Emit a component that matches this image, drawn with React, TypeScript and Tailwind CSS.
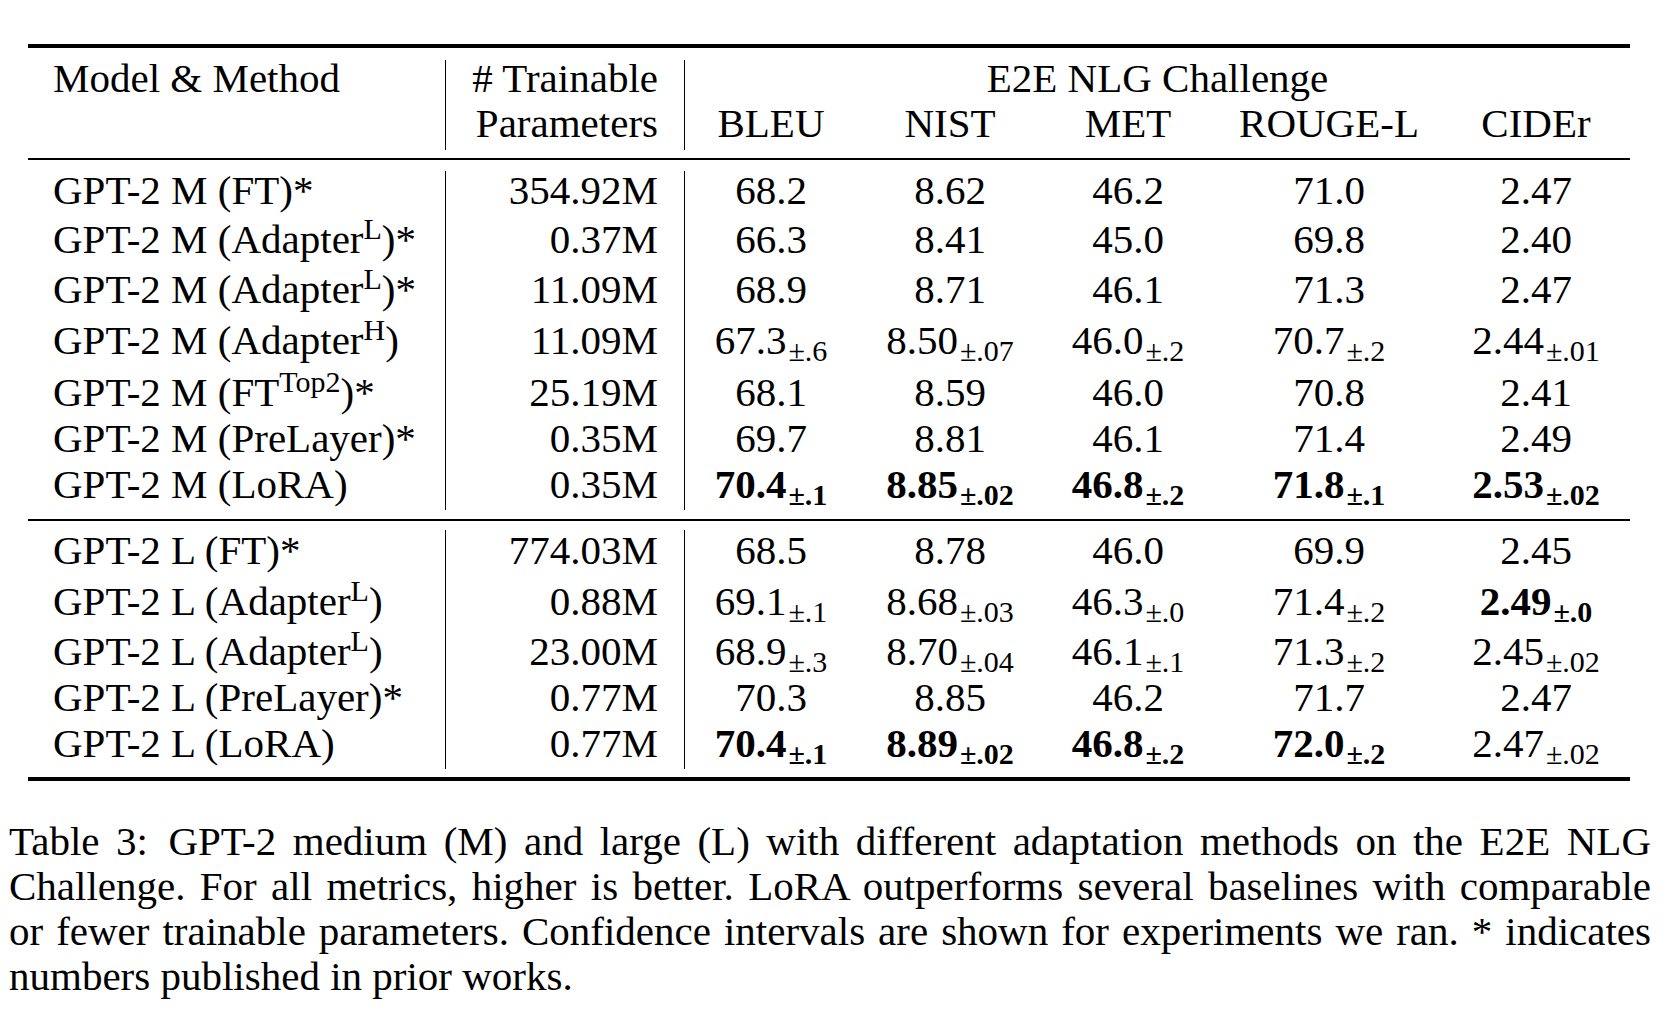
import React from 'react';

type Cell = { v: string; pm?: string; bold?: boolean };

interface RowData {
  name: React.ReactNode;
  params: string;
  cells: Cell[];
  cls: string;
}

const METRIC_WIDTHS = ['w-[172px]', 'w-[186px]', 'w-[170px]', 'w-[232px]', 'w-[182px]'];
const METRICS = ['BLEU', 'NIST', 'MET', 'ROUGE-L', 'CIDEr'];

const Sup = ({ children }: { children: React.ReactNode }) => (
  <span className="text-[30px] leading-[0] align-[14px]">{children}</span>
);

const c = (v: string, pm?: string, bold?: boolean): Cell => ({ v, pm, bold });
const plain = (...vals: string[]) => vals.map((v) => c(v));

const MEDIUM: RowData[] = [
  { name: 'GPT-2 M (FT)*', params: '354.92M', cells: plain('68.2', '8.62', '46.2', '71.0', '2.47'), cls: 'leading-[38px]' },
  {
    name: <>GPT-2 M (Adapter<Sup>L</Sup>)*</>,
    params: '0.37M',
    cells: plain('66.3', '8.41', '45.0', '69.8', '2.40'),
    cls: 'pt-[7px] leading-[46px]',
  },
  {
    name: <>GPT-2 M (Adapter<Sup>L</Sup>)*</>,
    params: '11.09M',
    cells: plain('68.9', '8.71', '46.1', '71.3', '2.47'),
    cls: 'pt-[4px] leading-[46px]',
  },
  {
    name: <>GPT-2 M (Adapter<Sup>H</Sup>)</>,
    params: '11.09M',
    cells: [c('67.3', '.6'), c('8.50', '.07'), c('46.0', '.2'), c('70.7', '.2'), c('2.44', '.01')],
    cls: 'pt-[5px] leading-[46px]',
  },
  {
    name: <>GPT-2 M (FT<Sup>Top2</Sup>)*</>,
    params: '25.19M',
    cells: plain('68.1', '8.59', '46.0', '70.8', '2.41'),
    cls: 'pt-[6px] leading-[46px]',
  },
  { name: 'GPT-2 M (PreLayer)*', params: '0.35M', cells: plain('69.7', '8.81', '46.1', '71.4', '2.49'), cls: 'leading-[46px]' },
  {
    name: 'GPT-2 M (LoRA)',
    params: '0.35M',
    cells: [c('70.4', '.1', true), c('8.85', '.02', true), c('46.8', '.2', true), c('71.8', '.1', true), c('2.53', '.02', true)],
    cls: 'pb-[3px] leading-[46px]',
  },
];

const LARGE: RowData[] = [
  { name: 'GPT-2 L (FT)*', params: '774.03M', cells: plain('68.5', '8.78', '46.0', '69.9', '2.45'), cls: 'leading-[40px]' },
  {
    name: <>GPT-2 L (Adapter<Sup>L</Sup>)</>,
    params: '0.88M',
    cells: [c('69.1', '.1'), c('8.68', '.03'), c('46.3', '.0'), c('71.4', '.2'), c('2.49', '.0', true)],
    cls: 'pt-[8px] leading-[46px]',
  },
  {
    name: <>GPT-2 L (Adapter<Sup>L</Sup>)</>,
    params: '23.00M',
    cells: [c('68.9', '.3'), c('8.70', '.04'), c('46.1', '.1'), c('71.3', '.2'), c('2.45', '.02')],
    cls: 'pt-[4px] leading-[46px]',
  },
  { name: 'GPT-2 L (PreLayer)*', params: '0.77M', cells: plain('70.3', '8.85', '46.2', '71.7', '2.47'), cls: 'leading-[46px]' },
  {
    name: 'GPT-2 L (LoRA)',
    params: '0.77M',
    cells: [c('70.4', '.1', true), c('8.89', '.02', true), c('46.8', '.2', true), c('72.0', '.2', true), c('2.47', '.02')],
    cls: 'pb-[3px] leading-[46px]',
  },
];

const Value = ({ cell }: { cell: Cell }) => (
  <span className={cell.bold ? 'font-bold' : ''}>
    {cell.v}
    {cell.pm && <span className="ml-[2px] text-[30px] leading-[0] align-[-7px]">±{cell.pm}</span>}
  </span>
);

const Row = ({ row }: { row: RowData }) => (
  <div className="flex">
    <div className={`w-[417px] pl-[25px] whitespace-nowrap ${row.cls}`}>{row.name}</div>
    <div className={`w-[239px] border-l border-black pr-[26px] text-right ${row.cls}`}>{row.params}</div>
    <div className={`flex border-l border-black ${row.cls}`}>
      {row.cells.map((cell, i) => (
        <div key={i} className={`${METRIC_WIDTHS[i]} text-center whitespace-nowrap`}>
          <Value cell={cell} />
        </div>
      ))}
    </div>
  </div>
);

const CAPTION = [
  'Table 3:\u2002GPT-2 medium (M) and large (L) with different adaptation methods on the E2E NLG',
  'Challenge. For all metrics, higher is better. LoRA outperforms several baselines with comparable',
  'or fewer trainable parameters. Confidence intervals are shown for experiments we ran. * indicates',
];

export default function App() {
  return (
    <div className="min-h-screen bg-white pt-[44px] text-black text-[41px] font-['Liberation_Serif','Times_New_Roman',serif]">
      <div className="ml-[28px] w-[1602px]">
        <div className="h-[4px] bg-black" />

        {/* header */}
        <div className="pt-[12px] pb-[8px]">
          <div className="flex leading-[36px]">
            <div className="w-[417px] pl-[25px]">Model &amp; Method</div>
            <div className="w-[239px] border-l border-black pr-[26px] text-right whitespace-nowrap"># Trainable</div>
            <div className="w-[946px] border-l border-black text-center">E2E NLG Challenge</div>
          </div>
          <div className="flex leading-[54px]">
            <div className="w-[417px]" />
            <div className="w-[239px] border-l border-black pr-[26px] text-right">Parameters</div>
            <div className="flex border-l border-black">
              {METRICS.map((m, i) => (
                <div key={m} className={`${METRIC_WIDTHS[i]} text-center`}>
                  {m}
                </div>
              ))}
            </div>
          </div>
        </div>
        <div className="h-[2px] bg-black" />

        {/* GPT-2 medium */}
        <div className="pt-[11px] pb-[9px]">
          {MEDIUM.map((row, i) => (
            <Row key={i} row={row} />
          ))}
        </div>
        <div className="h-[2px] bg-black" />

        {/* GPT-2 large */}
        <div className="pt-[9px] pb-[8px]">
          {LARGE.map((row, i) => (
            <Row key={i} row={row} />
          ))}
        </div>
        <div className="h-[4px] bg-black" />
      </div>

      <div className="ml-[9px] mt-[38px] w-[1642px] leading-[45px]">
        {CAPTION.map((line) => (
          <div key={line} className="text-justify [text-align-last:justify]">
            {line}
          </div>
        ))}
        <div>numbers published in prior works.</div>
      </div>
    </div>
  );
}
